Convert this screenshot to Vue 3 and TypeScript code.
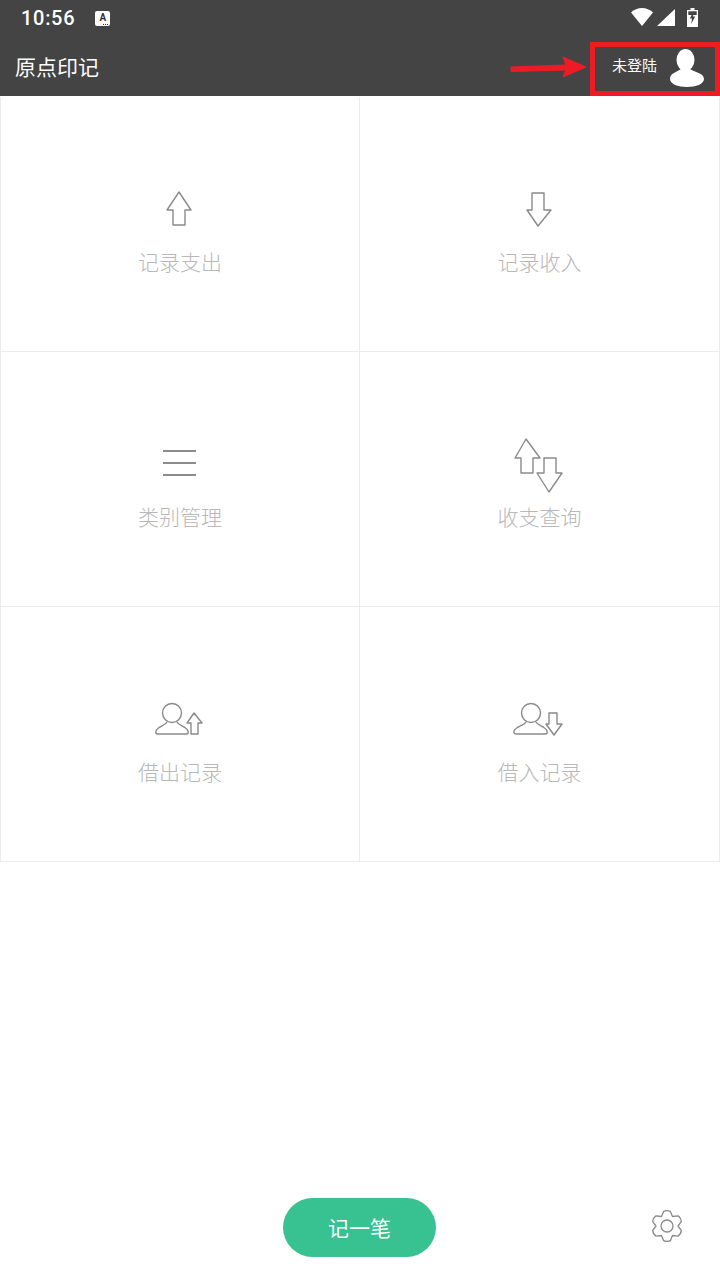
<script setup lang="ts">
type Shape = { points?: string; d?: string; lines?: number[][]; circle?: number[] };
interface Item { label: string; shapes: Shape[] }

const items: Item[] = [
  { label: '记录支出', shapes: [{ points: '39,12 27,30 33,30 33,45 45,45 45,30 51,30' }] },
  { label: '记录收入', shapes: [{ points: '32,13 32,30 27,30 38,46 51,30 44,30 44,13' }] },
  { label: '类别管理', shapes: [{ lines: [[23, 16, 56, 16], [23, 28, 56, 28], [23, 40, 56, 40]] }] },
  {
    label: '收支查询',
    shapes: [
      { points: '26,4 15,23 21,23 21,38 33,38 33,23 40,23' },
      { points: '44,23 44,38 37,38 49,57 62,38 56,38 56,23' },
    ],
  },
  {
    label: '借出记录',
    shapes: [
      { circle: [32, 23, 9.5] },
      { d: 'M18 44 H46 Q49 44 48 41 C46 36 39 36 37 32 M27 32 C25 36 18 36 16 41 Q15 44 18 44' },
      { points: '54,23 47,33 51,33 51,44 58,44 58,33 62,33' },
    ],
  },
  {
    label: '借入记录',
    shapes: [
      { circle: [31, 23, 9.5] },
      { d: 'M17 44 H45 Q48 44 47 41 C45 36 38 36 36 32 M26 32 C24 36 16 36 14 41 Q13 44 17 44' },
      { points: '49,23 49,34 46,34 54,45 62,34 57,34 57,23' },
    ],
  },
];

function gearPath(cx: number, cy: number): string {
  const pts: string[] = [];
  for (let i = 0; i < 6; i++) {
    const a = (-90 + i * 60) * Math.PI / 180;
    const p = (r: number, off: number) => {
      const t = a + off * Math.PI / 180;
      return `${(cx + r * Math.cos(t)).toFixed(1)} ${(cy + r * Math.sin(t)).toFixed(1)}`;
    };
    pts.push(`${i === 0 ? 'M' : 'L'}${p(15, -13)} Q${p(16.2, 0)} ${p(15, 13)} L${p(11, 30)}`);
  }
  return pts.join(' ') + ' Z';
}
const gear = gearPath(18, 18);
</script>

<template>
  <div class="page">
    <header class="top">
      <div class="status">
        <span class="time">10:56</span>
        <span class="note">A<i class="dots"></i></span>
        <span class="status-gap"></span>
        <svg class="wifi" width="22" height="18" viewBox="0 0 22 18"><path d="M0 4.5 C6 -1.5 16 -1.5 22 4.5 L11 18 Z" fill="#fff" /></svg>
        <svg class="signal" width="18" height="17" viewBox="0 0 18 17"><path d="M18 0 V17 H0 Z" fill="#fff" /></svg>
        <svg class="battery" width="11" height="19" viewBox="0 0 11 19">
          <path d="M3.5 0 H7.5 V2 H11 V19 H0 V2 H3.5 Z" fill="#fff" />
          <path d="M1.3 3.3 H9.7 V7 H1.3 Z" fill="#444" />
          <path d="M6.5 3.5 L2.8 10.5 H5 L4.2 16 L8.2 8.5 H6 Z" fill="#444" />
        </svg>
      </div>
      <div class="bar">
        <h1 class="title">原点印记</h1>
        <div class="login">
          <span class="login-text">未登陆</span>
          <svg class="avatar" width="34" height="38" viewBox="0 0 34 38">
            <ellipse cx="15.5" cy="11" rx="9" ry="11" fill="#fff" />
            <path d="M0 30 C0 24 7 23 11 20 H20 C24 23 34 24 34 30 C34 35 26 38 17 38 C8 38 0 35 0 30 Z" fill="#fff" />
          </svg>
        </div>
        <div class="mark-box"></div>
        <svg class="mark-arrow" width="78" height="24" viewBox="0 0 78 24">
          <path d="M1 13 L56 11 L53 3 L76 13 L53 23 L56 16 L1 17.5 Z" fill="#ed1c24" stroke="#ed1c24" stroke-linejoin="round" />
        </svg>
      </div>
    </header>

    <main class="grid">
      <div v-for="item in items" :key="item.label" class="cell">
        <svg class="icon" width="80" height="60" viewBox="0 0 80 60">
          <template v-for="(s, i) in item.shapes" :key="i">
            <polygon v-if="s.points" :points="s.points" />
            <path v-if="s.d" :d="s.d" />
            <circle v-if="s.circle" :cx="s.circle[0]" :cy="s.circle[1]" :r="s.circle[2]" />
            <template v-if="s.lines">
              <line v-for="(l, j) in s.lines" :key="j" :x1="l[0]" :y1="l[1]" :x2="l[2]" :y2="l[3]" class="menu-line" />
            </template>
          </template>
        </svg>
        <span class="label">{{ item.label }}</span>
      </div>
    </main>

    <footer class="foot">
      <span></span>
      <button class="add" type="button"><span class="add-text">记一笔</span></button>
      <svg class="gear" width="36" height="36" viewBox="0 0 36 36">
        <path :d="gear" />
        <circle cx="18" cy="18" r="6" />
      </svg>
    </footer>
  </div>
</template>

<style>
html, body { margin: 0; background: #fff; }
</style>

<style scoped>
.page {
  width: 720px;
  height: 1280px;
  display: flex;
  flex-direction: column;
  overflow: hidden;
  background: #fff;
  font-family: "Noto Sans CJK SC", "Noto Sans", sans-serif;
}
.top { background: #444; color: #fff; height: 96px; flex: none; }
.status {
  height: 42px;
  display: flex;
  align-items: center;
  padding: 0 22px 8px 21px;
  box-sizing: border-box;
}
.time { font-family: Roboto, sans-serif; font-weight: 500; font-size: 20px; letter-spacing: 0.7px; line-height: 36px; margin-top: 2px; }
.note {
  position: relative;
  margin-left: 20px;
  margin-top: 2px;
  width: 15px;
  height: 15px;
  background: #fff;
  color: #333;
  border-radius: 2px;
  font: 700 10px/13px Roboto, sans-serif;
  text-align: center;
}
.dots {
  position: absolute;
  right: 2px;
  bottom: 1px;
  width: 5px;
  height: 1px;
  background: repeating-linear-gradient(90deg, #333 0 1px, transparent 1px 2px);
}
.status-gap { flex: 1; }
.wifi { margin-right: 4px; }
.signal { margin-right: 12px; }
.bar {
  position: relative;
  height: 54px;
  display: flex;
  align-items: center;
  justify-content: space-between;
  padding: 0 16px 0 15px;
}
.title { margin: 0 0 6px; font-size: 21px; font-weight: 400; line-height: 30px; opacity: 0.99; }
.login { display: flex; align-items: center; }
.login-text { font-size: 15px; line-height: 22px; margin: 0 13px 8px 0; opacity: 0.99; }
.avatar { display: block; margin-bottom: 2px; }
.mark-box {
  position: absolute;
  left: 590px;
  right: 0;
  top: 0;
  bottom: 0;
  border: 5px solid #ed1c24;
  box-sizing: border-box;
}
.mark-arrow { position: absolute; left: 510px; top: 12px; }
.grid {
  display: grid;
  grid-template-columns: 1fr 1fr;
  grid-auto-rows: 255px;
  flex: none;
  padding-top: 1px;
}
.cell {
  display: flex;
  flex-direction: column;
  align-items: center;
  padding-top: 83px;
  box-sizing: border-box;
  border-right: 1px solid #ececec;
  border-bottom: 1px solid #ececec;
}
.cell:nth-child(odd) { border-left: 1px solid #ececec; }
.icon { display: block; }
.icon polygon, .icon path, .icon circle {
  fill: none;
  stroke: #8a8a8a;
  stroke-width: 1.4;
  stroke-linejoin: round;
}
.menu-line { stroke: #666; stroke-width: 1.6; }
.label {
  margin-top: 6px;
  font-size: 21px;
  font-weight: 300;
  line-height: 30px;
  color: #b8b8b8;
  opacity: 0.99;
}
.foot {
  margin-top: auto;
  display: grid;
  grid-template-columns: 1fr 153px 1fr;
  align-items: center;
  padding: 0 1px 23px 0;
  justify-items: end;
}
.add {
  width: 153px;
  height: 59px;
  border: none;
  border-radius: 30px;
  background: #38c291;
  color: #fff;
  font-family: inherit;
  font-size: 21px;
  font-weight: 400;
  padding: 0 0 2px;
}
.add-text { opacity: 0.99; }
.gear { margin: 0 34px 3px 0; display: block; }
.gear path, .gear circle { fill: none; stroke: #8a8a8a; stroke-width: 1.3; stroke-linejoin: round; }
</style>
